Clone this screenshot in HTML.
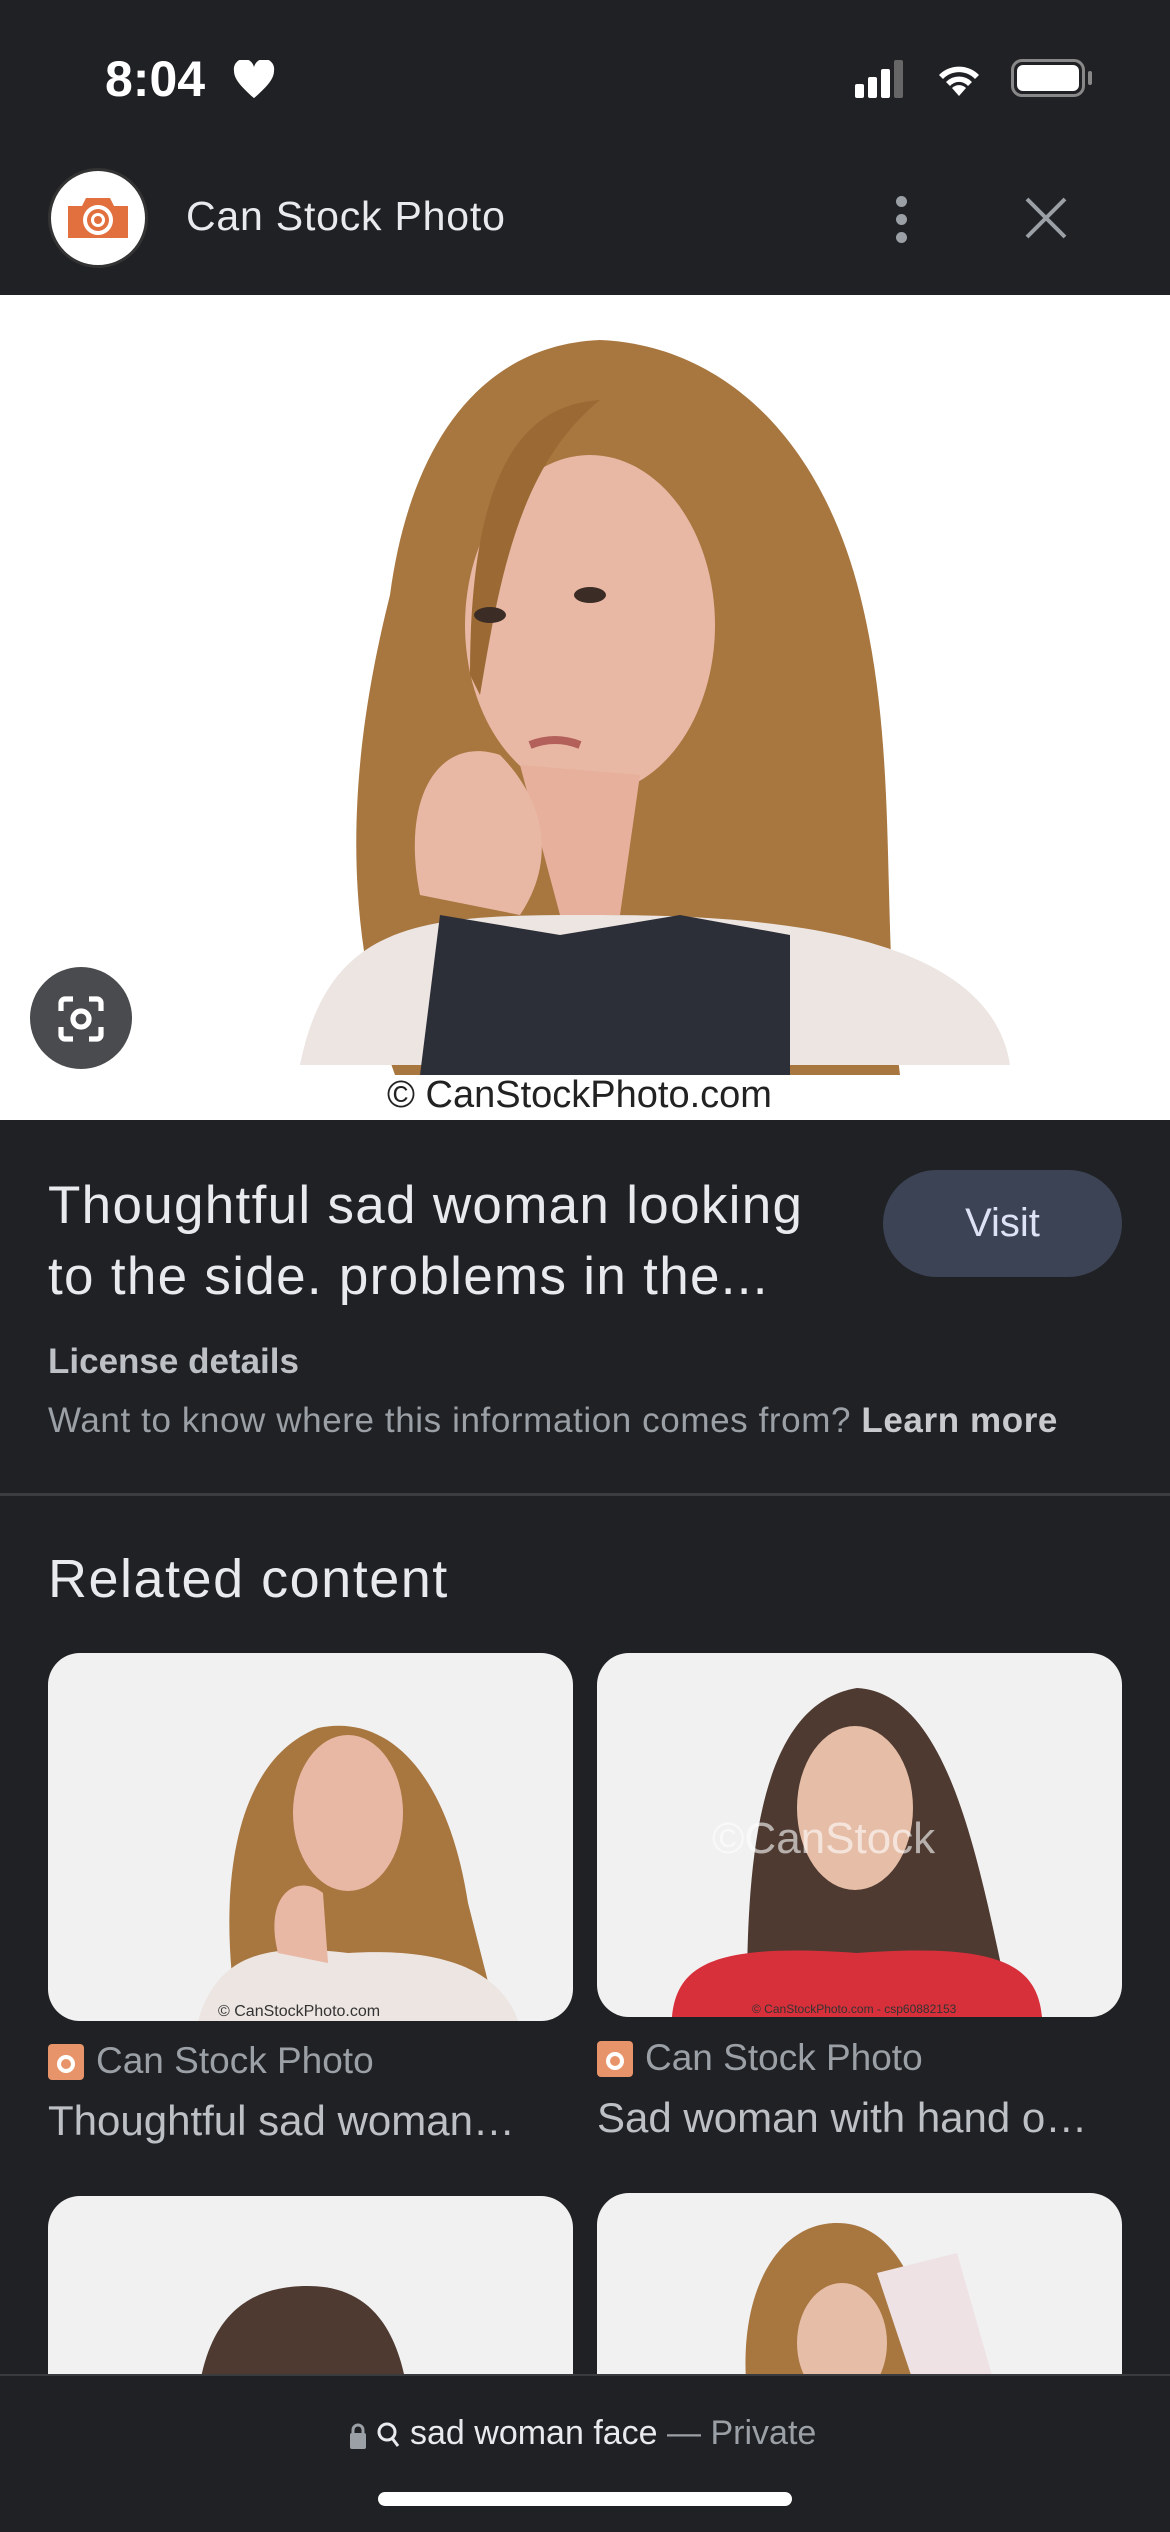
<!DOCTYPE html>
<html><head><meta charset="utf-8"><style>
*{margin:0;padding:0;box-sizing:border-box}
body{width:1170px;height:2532px;background:#202124;font-family:"Liberation Sans",sans-serif;position:relative;overflow:hidden;color:#e8eaed}
.a{position:absolute}
.card{position:absolute;background:#f1f1f1;border-radius:32px;overflow:hidden}
</style></head><body>
<div class="a" style="left:105px;top:50px;font-size:50px;font-weight:bold;color:#fff">8:04</div>
<svg class="a" style="left:232px;top:60px" width="44" height="40" viewBox="0 0 24 22"><path d="M12 21 C4 14 1 10 1 6 A5 5 0 0 1 12 4 A5 5 0 0 1 23 6 C23 10 20 14 12 21Z" fill="#fff"/></svg>
<svg class="a" style="left:855px;top:58px" width="60" height="40"><rect x="0" y="26" width="9" height="14" rx="2" fill="#fff"/><rect x="13" y="19" width="9" height="21" rx="2" fill="#fff"/><rect x="26" y="11" width="9" height="29" rx="2" fill="#fff"/><rect x="39" y="2" width="9" height="38" rx="2" fill="#666"/></svg>
<svg class="a" style="left:935px;top:58px" width="48" height="40" viewBox="0 0 24 20"><path d="M12 19 L8.5 15 A5 5 0 0 1 15.5 15Z M5.5 12 A9 9 0 0 1 18.5 12 L16.5 14 A6 6 0 0 0 7.5 14Z M2 8.5 A14 14 0 0 1 22 8.5 L20 10.5 A11 11 0 0 0 4 10.5Z" fill="#fff"/></svg>
<div class="a" style="left:1011px;top:59px;width:74px;height:38px;border:3px solid #888;border-radius:11px"></div>
<div class="a" style="left:1017px;top:65px;width:62px;height:26px;background:#fff;border-radius:6px"></div>
<div class="a" style="left:1088px;top:71px;width:4px;height:14px;background:#888;border-radius:2px"></div>

<div class="a" style="left:48px;top:168px;width:100px;height:100px;border-radius:50%;background:#fff;border:3px solid #333"></div>
<svg class="a" style="left:66px;top:192px" width="64" height="48" viewBox="0 0 32 24"><path d="M1 7h7l2-4h12l2 4h7v16H1Z" fill="#e2703f"/><circle cx="16" cy="14" r="7.5" fill="#fff"/><circle cx="16" cy="14" r="5.5" fill="#e2703f"/><circle cx="16" cy="14" r="3.5" fill="#fff"/><circle cx="16" cy="14" r="2" fill="#e2703f"/></svg>
<div class="a" style="left:186px;top:193px;font-size:41px;letter-spacing:0.8px;color:#e8eaed">Can Stock Photo</div>
<div class="a" style="left:896px;top:196px;width:11px;height:11px;border-radius:50%;background:#9aa0a6;box-shadow:0 18px 0 #9aa0a6,0 36px 0 #9aa0a6"></div>
<svg class="a" style="left:1024px;top:196px" width="44" height="44"><path d="M3 3L41 41M41 3L3 41" stroke="#9aa0a6" stroke-width="4"/></svg>

<div class="a" style="left:0;top:295px;width:1170px;height:825px;background:#fff;overflow:hidden">
<svg width="1170" height="825">
<path d="M395 780 C330 600 360 420 390 300 C410 150 480 50 600 45 C720 50 820 140 860 300 C900 460 880 620 900 780Z" fill="#a8763f"/>
<path d="M300 770 C330 620 430 620 600 620 C780 620 990 640 1010 770Z" fill="#ece5e2"/>
<path d="M420 780 L440 620 L560 640 L680 620 L790 640 L790 780Z" fill="#2d2f38"/>
<ellipse cx="590" cy="330" rx="125" ry="170" fill="#e8b8a4"/>
<path d="M520 470 L640 480 L620 620 L560 620Z" fill="#e6b09c"/>
<path d="M470 380 C470 180 520 110 600 105 C520 170 500 280 480 400Z" fill="#9b6a34"/>
<ellipse cx="490" cy="320" rx="16" ry="8" fill="#3b2d26"/><ellipse cx="590" cy="300" rx="16" ry="8" fill="#3b2d26"/>
<path d="M530 450 Q555 440 580 450" stroke="#b4605a" stroke-width="8" fill="none"/>
<path d="M420 600 C400 500 440 440 500 460 C540 500 560 560 520 620Z" fill="#e8b8a4"/>
<text x="387" y="812" font-family="Liberation Sans" font-size="38" fill="#222">© CanStockPhoto.com</text>
</svg></div>
<div class="a" style="left:30px;top:967px;width:102px;height:102px;border-radius:50%;background:#4a4b4e"></div>
<svg class="a" style="left:55px;top:993px" width="52" height="52" viewBox="0 0 26 26" fill="none" stroke="#fff" stroke-width="2.6"><path d="M3 9V5a2 2 0 0 1 2-2h4M17 3h4a2 2 0 0 1 2 2v4M23 17v4a2 2 0 0 1-2 2h-4M9 23H5a2 2 0 0 1-2-2v-4"/><circle cx="13" cy="13" r="4"/></svg>

<div class="a" style="left:48px;top:1170px;font-size:53px;letter-spacing:1.3px;line-height:71px;color:#e8eaed;width:840px;white-space:nowrap">Thoughtful sad woman looking<br>to the side. problems in the...</div>
<div class="a" style="left:883px;top:1170px;width:239px;height:107px;border-radius:54px;background:#3c4354;color:#dde3f5;font-size:40px;text-align:center;line-height:107px">Visit</div>
<div class="a" style="left:48px;top:1342px;font-size:35px;font-weight:bold;color:#bdc1c6">License details</div>
<div class="a" style="left:48px;top:1401px;font-size:35px;letter-spacing:0.6px;color:#9aa0a6;white-space:nowrap">Want to know where this information comes from? <b style="color:#c8cacd">Learn more</b></div>
<div class="a" style="left:0;top:1493px;width:1170px;height:3px;background:#3c3d40"></div>
<div class="a" style="left:48px;top:1548px;font-size:54px;letter-spacing:1.5px;color:#e8eaed">Related content</div>

<div class="card" style="left:48px;top:1653px;width:525px;height:368px">
<svg width="525" height="368"><path d="M190 368 C170 250 180 110 270 75 C340 60 400 120 420 250 L450 368Z" fill="#a8763f"/><path d="M150 368 C170 300 220 290 300 300 C380 295 450 310 470 368Z" fill="#ece5e2"/><ellipse cx="300" cy="160" rx="55" ry="78" fill="#e8b8a4"/><path d="M230 300 C215 240 250 220 275 240 L280 310Z" fill="#e8b8a4"/><text x="170" y="363" font-family="Liberation Sans" font-size="16" fill="#333">© CanStockPhoto.com</text></svg></div>
<div class="card" style="left:597px;top:1653px;width:525px;height:364px">
<svg width="525" height="364"><path d="M150 340 C150 180 170 50 260 35 C350 40 380 200 410 340Z" fill="#4e3a31"/><path d="M75 364 C80 310 120 290 260 300 C400 290 440 310 445 364Z" fill="#d8303a"/><ellipse cx="258" cy="155" rx="58" ry="82" fill="#e6bda6"/><text x="115" y="200" font-family="Liberation Sans" font-size="44" fill="#fff" opacity=".6">©CanStock</text><text x="155" y="360" font-family="Liberation Sans" font-size="12" fill="#333">© CanStockPhoto.com - csp60882153</text></svg></div>

<svg class="a" style="left:48px;top:2044px" width="36" height="36"><rect width="36" height="36" rx="4" fill="#e8946a"/><circle cx="18" cy="20" r="9" fill="#fff"/><circle cx="18" cy="20" r="5" fill="#e8946a"/></svg>
<div class="a" style="left:96px;top:2040px;font-size:37px;color:#9aa0a6">Can Stock Photo</div>
<div class="a" style="left:48px;top:2097px;font-size:42px;color:#bdc1c6">Thoughtful sad woman…</div>
<svg class="a" style="left:597px;top:2041px" width="36" height="36"><rect width="36" height="36" rx="4" fill="#e8946a"/><circle cx="18" cy="20" r="9" fill="#fff"/><circle cx="18" cy="20" r="5" fill="#e8946a"/></svg>
<div class="a" style="left:645px;top:2037px;font-size:37px;color:#9aa0a6">Can Stock Photo</div>
<div class="a" style="left:597px;top:2094px;font-size:42px;color:#bdc1c6">Sad woman with hand o…</div>

<div class="card" style="left:48px;top:2196px;width:525px;height:260px">
<svg width="525" height="200"><path d="M150 200 C160 120 200 90 260 90 C320 90 350 130 360 200Z" fill="#4e3a31"/></svg></div>
<div class="card" style="left:597px;top:2193px;width:525px;height:260px">
<svg width="525" height="200"><path d="M150 200 C140 100 180 30 240 30 C300 30 330 100 340 200Z" fill="#a8763f"/><path d="M280 80 L360 60 L400 200 L320 200Z" fill="#eee2e5"/><ellipse cx="245" cy="150" rx="45" ry="60" fill="#e6bda6"/></svg></div>

<div class="a" style="left:0;top:2374px;width:1170px;height:158px;background:#202124;border-top:2px solid #3a3b3e"></div>
<svg class="a" style="left:349px;top:2423px" width="18" height="26"><rect x="1" y="10" width="16" height="16" rx="2" fill="#9aa0a6"/><path d="M4 11V7a5 5 0 0 1 10 0v4" stroke="#9aa0a6" stroke-width="3" fill="none"/></svg>
<svg class="a" style="left:376px;top:2420px" width="26" height="30"><circle cx="11" cy="12" r="8" stroke="#e8eaed" stroke-width="3" fill="none"/><path d="M16 18L22 26" stroke="#e8eaed" stroke-width="3"/></svg>
<div class="a" style="left:410px;top:2414px;font-size:34px;color:#e8eaed">sad woman face <span style="color:#9aa0a6">— Private</span></div>
<div class="a" style="left:378px;top:2492px;width:414px;height:14px;border-radius:7px;background:#fff"></div>
</body></html>
